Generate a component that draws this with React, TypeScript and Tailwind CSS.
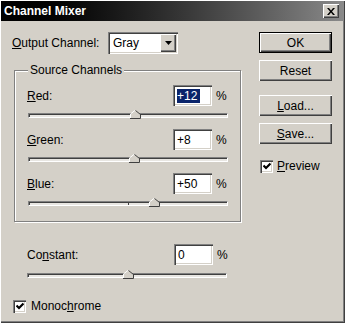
import React from "react";

const font = { fontFamily: '"Liberation Sans", Arial, sans-serif' };

function U({ children }: { children: React.ReactNode }) {
  return <span className="underline underline-offset-[1px] decoration-[1px]">{children}</span>;
}

function Btn({ children, def }: { children: React.ReactNode; def?: boolean }) {
  return (
    <div
      className={
        "h-[21px] w-[73px] flex items-center justify-center text-[12px] text-black bg-[#d4d0c8] " +
        (def
          ? "border border-black shadow-[inset_1px_1px_0_#fff,inset_-1px_-1px_0_#404040,inset_-2px_-2px_0_#808080]"
          : "shadow-[inset_1px_1px_0_#fff,inset_-1px_-1px_0_#404040,inset_-2px_-2px_0_#808080]")
      }
    >
      {children}
    </div>
  );
}

function Check() {
  return (
    <div className="w-[13px] h-[13px] bg-white shrink-0 shadow-[inset_1px_1px_0_#808080,inset_2px_2px_0_#404040,inset_-1px_-1px_0_#fff,inset_-2px_-2px_0_#d4d0c8] flex items-center justify-center">
      <svg width="8" height="8" viewBox="0 0 8 8">
        <path d="M0.5 3.5 L3 6 L7.5 1.5" stroke="#000" strokeWidth="2.2" fill="none" />
      </svg>
    </div>
  );
}

function Input({ value, selected }: { value: string; selected?: boolean }) {
  return (
    <div className="w-[39px] h-[21px] bg-white shrink-0 shadow-[inset_1px_1px_0_#808080,inset_2px_2px_0_#404040,inset_-1px_-1px_0_#fff,inset_-2px_-2px_0_#d4d0c8] flex items-center pl-[4px] text-[12px]">
      {selected ? <span className="bg-[#0a246a] text-white leading-[14px] pr-[3px]">{value}</span> : <span>{value}</span>}
    </div>
  );
}

function Slider({ pos, mid }: { pos: number; mid?: boolean }) {
  return (
    <div className="relative w-[200px] h-[5px] ml-[1px] bg-[#e8e6e2] border border-t-[#808080] border-l-[#808080] border-b-[#fff] border-r-[#fff] shadow-[inset_1px_1px_0_#404040]">
      {mid && <div className="absolute left-[99px] top-0 w-[1px] h-[3px] bg-[#404040]" />}
      <svg className="absolute top-[-4px]" style={{ left: pos - 5 }} width="11" height="9" viewBox="0 0 11 9">
        <path d="M0.5 8.5 L0.5 4 L5 0.5 L5.5 0.5 L10 4 L10 8.5 Z" fill="#d4d0c8" />
        <path d="M0.5 8.5 L0.5 4 L5.5 0" stroke="#fff" fill="none" />
        <path d="M5.5 0.5 L10.5 4.5 L10.5 8.5 L0 8.5" stroke="#404040" fill="none" />
      </svg>
    </div>
  );
}

function Row({ label, value, selected }: { label: React.ReactNode; value: string; selected?: boolean }) {
  return (
    <div className="flex items-center h-[21px]">
      <div className="flex-1 text-[12px]">{label}</div>
      <Input value={value} selected={selected} />
      <div className="ml-[4px] w-[12px] text-[12px]">%</div>
    </div>
  );
}

export default function App() {
  return (
    <div
      style={font}
      className="w-[345px] h-[323px] bg-[#d4d0c8] text-black flex flex-col shadow-[inset_1px_1px_0_#fff,inset_-1px_-1px_0_#404040,inset_-2px_-2px_0_#808080]"
    >
      <div className="mt-[1px] mx-[1px] h-[20px] bg-gradient-to-r from-black to-[#8a8a8a] flex items-center justify-between pl-[3px] pr-[5px]">
        <span className="text-white font-bold text-[12px]">Channel Mixer</span>
        <div className="w-[16px] h-[14px] bg-[#d4d0c8] shadow-[inset_1px_1px_0_#fff,inset_-1px_-1px_0_#404040,inset_-2px_-2px_0_#808080] flex items-center justify-center">
          <svg width="8" height="7" viewBox="0 0 8 7">
            <path d="M0 0 L2 0 L4 2.5 L6 0 L8 0 L5 3.5 L8 7 L6 7 L4 4.5 L2 7 L0 7 L3 3.5 Z" fill="#000" />
          </svg>
        </div>
      </div>

      <div className="flex pt-[11px] pl-[12px]">
        {/* left column */}
        <div className="w-[229px] flex flex-col">
          <div className="flex items-center h-[22px]">
            <span className="text-[12px] w-[96px]">
              <U>O</U>utput Channel:
            </span>
            <div className="w-[70px] h-[22px] bg-white flex items-center shadow-[inset_1px_1px_0_#808080,inset_2px_2px_0_#404040,inset_-1px_-1px_0_#fff,inset_-2px_-2px_0_#d4d0c8] pl-[2px] pr-[2px]">
              <span className="flex-1 text-[12px] pl-[3px]">Gray</span>
              <div className="w-[16px] h-[18px] bg-[#d4d0c8] shadow-[inset_1px_1px_0_#fff,inset_-1px_-1px_0_#404040,inset_-2px_-2px_0_#808080] flex items-center justify-center">
                <svg width="7" height="4" viewBox="0 0 7 4">
                  <path d="M0 0 L7 0 L3.5 4 Z" fill="#000" />
                </svg>
              </div>
            </div>
          </div>

          <div className="relative mt-[16px] ml-[2px] w-[227px] h-[152px] border border-[#808080] shadow-[inset_1px_1px_0_#fff,1px_1px_0_#fff] pt-[14px] pl-[12px] pr-[12px]">
            <span className="absolute left-[13px] top-[-8px] bg-[#d4d0c8] px-[2px] text-[12px] leading-[14px]">
              Source Channels
            </span>
            <Row label={<><U>R</U>ed:</>} value="+12" selected />
            <div className="mt-[7px]">
              <Slider pos={106} />
            </div>
            <div className="mt-[11px]">
              <Row label={<><U>G</U>reen:</>} value="+8" />
            </div>
            <div className="mt-[7px]">
              <Slider pos={105} />
            </div>
            <div className="mt-[11px]">
              <Row label={<><U>B</U>lue:</>} value="+50" />
            </div>
            <div className="mt-[7px]">
              <Slider pos={125} mid />
            </div>
          </div>

          <div className="mt-[22px] pl-[15px] pr-[12px]">
            <Row label={<>Co<U>n</U>stant:</>} value="0" />
            <div className="mt-[8px] -ml-[1px]">
              <Slider pos={100} />
            </div>
          </div>

          <div className="mt-[19px] flex items-center">
            <div className="ml-[1px]">
              <Check />
            </div>
            <span className="ml-[5px] text-[12px]">
              Monoc<U>h</U>rome
            </span>
          </div>
        </div>

        {/* right column */}
        <div className="ml-[18px] flex flex-col">
          <Btn def>OK</Btn>
          <div className="mt-[7px]">
            <Btn>Reset</Btn>
          </div>
          <div className="mt-[14px]">
            <Btn>
              <span>
                <U>L</U>oad...
              </span>
            </Btn>
          </div>
          <div className="mt-[7px]">
            <Btn>
              <span>
                <U>S</U>ave...
              </span>
            </Btn>
          </div>
          <div className="mt-[13px] flex items-center pl-[1px]">
            <Check />
            <span className="ml-[4px] text-[12px]">
              <U>P</U>review
            </span>
          </div>
        </div>
      </div>
    </div>
  );
}
